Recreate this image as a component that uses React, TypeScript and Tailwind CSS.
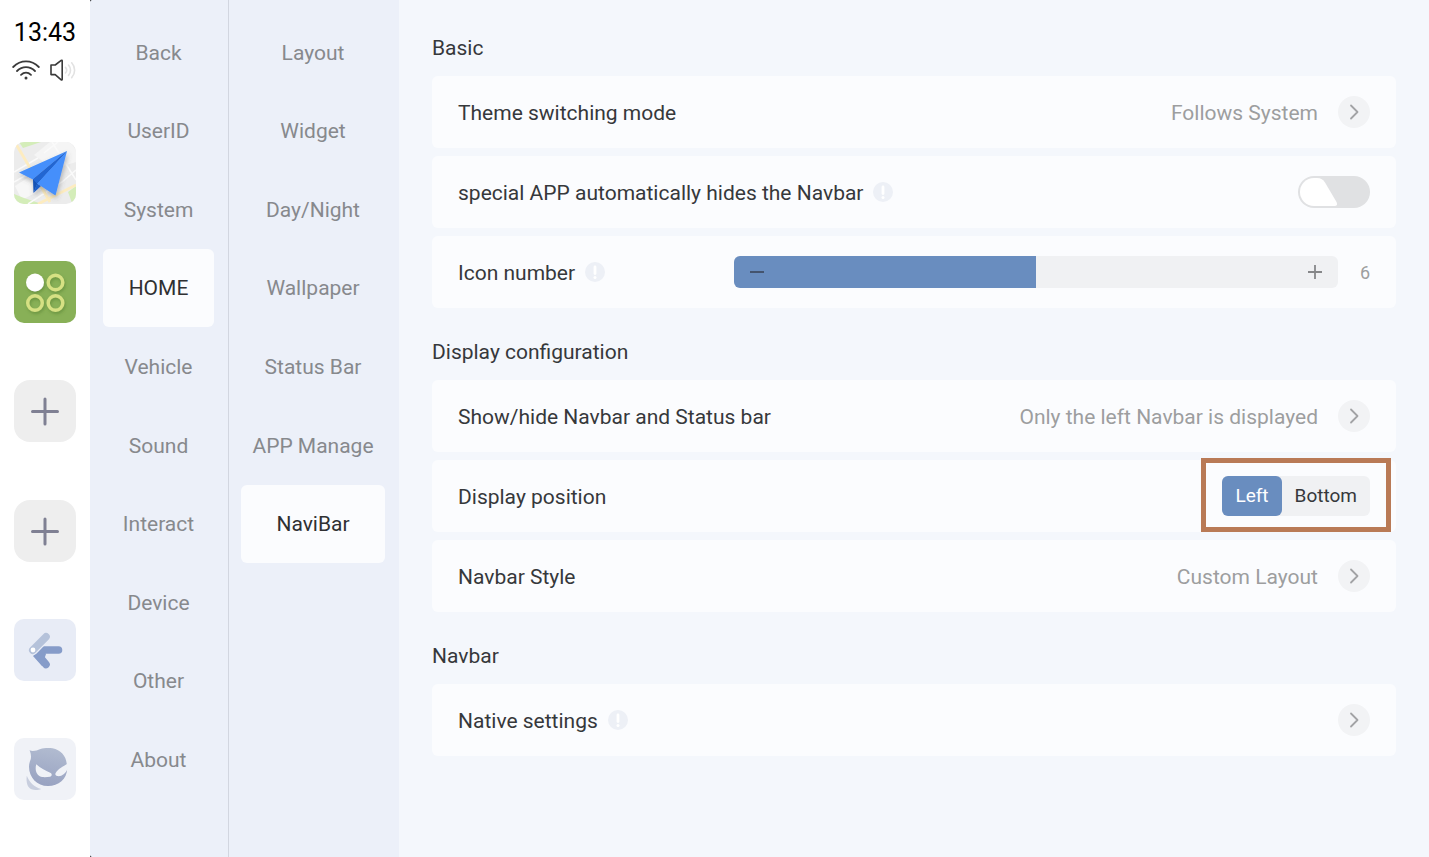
import React, { useState } from 'react';

const mainMenu = ['Back', 'UserID', 'System', 'HOME', 'Vehicle', 'Sound', 'Interact', 'Device', 'Other', 'About'];
const homeMenu = ['Layout', 'Widget', 'Day/Night', 'Wallpaper', 'Status Bar', 'APP Manage', 'NaviBar'];
const MAX_ICONS = 12;

/* Icons */
const WifiIcon = () => (
  <svg width="28" height="22" viewBox="0 0 28 22" fill="none" stroke="#3a3a3a" strokeWidth="1.8" strokeLinecap="round">
    <path d="M1.2 8C8.6 .6 19.4 .6 26.8 8" />
    <path d="M5 12c5.3-5.2 12.7-5.2 18 0" />
    <path d="M9 15.8c3-2.8 7-2.8 10 0" />
    <circle cx="14" cy="19" r="1.5" fill="#3a3a3a" stroke="none" />
  </svg>
);

const VolumeIcon = () => (
  <svg width="26" height="22" viewBox="0 0 26 22" fill="none" strokeWidth="1.6" strokeLinecap="round" strokeLinejoin="round">
    <path d="M1 6h4.200l6-4.600c.5-.4 1-.1 1 .5v18.400c0 .6-.5.9-1 .5l-6-5.200H1z" stroke="#3a3a3a" />
    <path d="M15.500 8.400c1.400 1.600 1.400 4 0 5.600M18.500 6c2.700 3 2.700 7.400 0 10.400M21.700 3.800c3.900 4.300 3.900 10.500 0 14.800" stroke="#e2e2e2" />
  </svg>
);

const MapIcon = () => (
  <svg width="62" height="62" viewBox="0 0 62 62">
    <defs>
      <filter id="planeShadow" x="-20%" y="-20%" width="150%" height="150%">
        <feDropShadow dx="1" dy="3" stdDeviation="2.5" floodColor="#555" floodOpacity="0.4" />
      </filter>
    </defs>
    <rect width="62" height="62" fill="#ececec" />
    <path d="M5 0h22L9 6z" fill="#d4edb9" />
    <path d="M20 13 36 0h20l6 8v12L40 27z" fill="#f5f5f5" />
    <path d="M1 44l20-13 9 15-22 12z" fill="#f7f7f7" />
    <path d="M0 52l10 4 18 6H0zM54 50l8-6v14l-4 3z" fill="#d4edb9" />
    <path d="M0 30 24 16M30 11 44 0M38 0l24 38M0 40l32-18M14 62l34-22 14-12" fill="none" stroke="#fafafa" strokeWidth="1.5" />
    <path d="M2 2l34 58M24 62l38-19" fill="none" stroke="#fdecc0" strokeWidth="2.8" />
    <g filter="url(#planeShadow)">
      <path d="M53 9 5 30.500l14 7z" fill="#448ffb" />
      <path d="M53 9 19 37.500l.5 13.500 4-9.500z" fill="#1553b4" />
      <path d="M23 41.500 19.500 51l7.500-7z" fill="#1a5fc9" />
      <path d="M53 9 23 41.500l18.500 12z" fill="#448ffb" />
      <path d="M53 9 19 37.500l4 4z" fill="#2266d2" />
    </g>
  </svg>
);

const AppsIcon = () => (
  <svg width="62" height="62" viewBox="0 0 62 62">
    <defs>
      <filter id="dotShadow" x="-20%" y="-20%" width="150%" height="150%">
        <feDropShadow dx="1" dy="2" stdDeviation="1.5" floodColor="#4f7a2a" floodOpacity="0.5" />
      </filter>
    </defs>
    <g filter="url(#dotShadow)">
      <circle cx="21" cy="21.500" r="9" fill="#fff" />
      <g fill="none" stroke="#d6e183" strokeWidth="3.4">
        <circle cx="41.500" cy="21.500" r="7.300" />
        <circle cx="21" cy="42" r="7.300" />
        <circle cx="41.500" cy="42" r="7.300" />
      </g>
    </g>
  </svg>
);

const PlusIcon = () => (
  <svg width="62" height="62" viewBox="0 0 62 62" stroke="#7f8093" strokeWidth="3" strokeLinecap="round">
    <path d="M18.500 31.500h25M31 19v25" />
  </svg>
);

const BackIcon = () => (
  <svg width="62" height="62" viewBox="0 0 62 62" strokeLinecap="round" strokeLinejoin="round">
    <path d="M44.500 31H26M24.500 36.500l7.500 9" fill="none" stroke="#869cc9" strokeWidth="7.6" />
    <path d="M19 37l9-8 4 6-4 12z" fill="#869cc9" />
    <path d="M18.800 31.200 32 17.800" stroke="#e8ecf6" strokeWidth="10" />
    <path d="M18.800 31.200 32 17.800" stroke="#b5c2da" strokeWidth="7.6" />
    <circle cx="19" cy="31" r="2.400" fill="#fff" />
  </svg>
);

const MaskIcon = () => (
  <svg width="62" height="62" viewBox="0 0 62 62">
    <defs>
      <linearGradient id="maskFill" x1="0.6" y1="0" x2="0.4" y2="1">
        <stop offset="0" stopColor="#b1bbd0" />
        <stop offset="1" stopColor="#98a2c1" />
      </linearGradient>
    </defs>
    <path d="M15.500 12.300c3.500 1.700 7 .2 11-1.300 3-1 8-1.300 12-.7 8 1.400 13.500 7.700 14.200 15.200l.5 5C53 41 44.500 48 34 48c-11 0-19-8.500-19-19.300 0-3 .8-5.200 1.800-7.700.5-3.200 0-6-1.300-8.700z" fill="url(#maskFill)" />
    <path d="M22.200 26.300c4.300 4.200 9.800 6.500 14.500 8.700 1.800 1.200 1 3.400-.7 3.700-2.500.4-5.500.6-8 .3-5-.8-7.500-6-5.800-12.700z" fill="#f0f2f7" />
    <path d="M54 25.500c-5 3-10.500 5.500-12.500 9.800-.5 1.500.2 2.400 1.500 2.700 4.500.8 7.700-1.500 11-7.500z" fill="#f0f2f7" />
    <path d="M12.800 37.700c3 6.800 7.200 11.300 14.400 13.300-2.700 1.200-7 1.400-9.700.3-4.200-1.800-5.600-7.300-4.700-13.600z" fill="#c8cede" />
  </svg>
);

const Chevron = () => (
  <span className="flex size-8 items-center justify-center rounded-full bg-[#f2f3f5]">
    <svg width="10" height="16" viewBox="0 0 10 16" fill="none" stroke="#a2a3a5" strokeWidth="1.8" strokeLinecap="round" strokeLinejoin="round">
      <path d="M2 1.500 8.500 8 2 14.500" />
    </svg>
  </span>
);

const Hint = () => (
  <svg width="20" height="20" viewBox="0 0 20 20" aria-hidden="true">
    <circle cx="10" cy="10" r="10" fill="#edf0f6" />
    <path d="M10 5v6.500" stroke="#fff" strokeWidth="2.8" strokeLinecap="round" />
    <circle cx="10" cy="15.500" r="1.500" fill="#fff" />
  </svg>
);

/* Building blocks */
interface MenuProps {
  items: string[];
  active: string;
  onSelect: (item: string) => void;
  className: string;
}

const Menu: React.FC<MenuProps> = ({ items, active, onSelect, className }) => (
  <nav className={`grid shrink-0 grid-rows-10 pt-[13px] pb-[58px] ${className}`}>
    {items.map(item => (
      <button
        key={item}
        onClick={() => onSelect(item)}
        className={`rounded-md pt-0.5 text-center text-[21px] ${item === active ? 'bg-[#fbfcfe] text-[#2f3032]' : 'text-[#87898d]'}`}
      >
        {item}
      </button>
    ))}
  </nav>
);

const Section: React.FC<{ title: string; children: React.ReactNode }> = ({ title, children }) => (
  <section>
    <h2 className="mb-3 text-[21px] leading-8 text-[#36383b]">{title}</h2>
    <div className="flex flex-col gap-2">{children}</div>
  </section>
);

const rowClass = 'flex h-[72px] w-full items-center justify-between rounded-md bg-[#fbfcfe] px-[26px] text-left text-[21px] text-[#36383b]';

const LinkRow: React.FC<{ label: string; value?: string; hint?: boolean }> = ({ label, value, hint }) => (
  <button className={rowClass}>
    <span className="flex items-center gap-[10px]">
      <span className="pt-1">{label}</span>
      {hint && <Hint />}
    </span>
    <span className="flex items-center gap-5 text-[#9d9e9f]">
      {value && <span className="pt-1">{value}</span>}
      <Chevron />
    </span>
  </button>
);

export default function App() {
  const [page, setPage] = useState('HOME');
  const [subPage, setSubPage] = useState('NaviBar');
  const [autoHide, setAutoHide] = useState(false);
  const [iconCount, setIconCount] = useState(6);
  const [position, setPosition] = useState('Left');

  const dock = [
    { name: 'Map', icon: <MapIcon />, style: 'rounded-[10px]' },
    { name: 'Apps', icon: <AppsIcon />, style: 'rounded-[10px] bg-[#88b057]' },
    { name: 'Add first shortcut', icon: <PlusIcon />, style: 'rounded-2xl bg-[#eeeeee]' },
    { name: 'Add second shortcut', icon: <PlusIcon />, style: 'rounded-2xl bg-[#eeeeee]' },
    { name: 'Go back', icon: <BackIcon />, style: 'rounded-[10px] bg-[#e8ecf6]' },
    { name: 'Assistant', icon: <MaskIcon />, style: 'rounded-[10px] bg-[#f0f2f7]' },
  ];

  return (
    <div className="flex h-screen min-h-[640px] bg-black font-[Roboto,sans-serif]">
      {/* Dock */}
      <aside className="flex w-[90px] shrink-0 flex-col items-center bg-white pb-[57px]">
        <div className="mt-[18px] text-[25px] leading-[30px] text-black">13:43</div>
        <div className="mt-[11px] mb-[61px] flex items-center gap-[10px] pr-0.5">
          <WifiIcon />
          <VolumeIcon />
        </div>
        <div className="flex flex-1 flex-col justify-between">
          {dock.map(app => (
            <button key={app.name} aria-label={app.name} className={`size-[62px] overflow-hidden ${app.style}`}>
              {app.icon}
            </button>
          ))}
        </div>
      </aside>

      {/* Menus */}
      <div className="flex shrink-0 rounded-l-[2px] bg-[#ecf0f9]">
        <Menu items={mainMenu} active={page} onSelect={setPage} className="w-[139px] border-r border-[#d2d6e0] pr-3.5 pl-[13px]" />
        <Menu items={homeMenu} active={subPage} onSelect={setSubPage} className="w-[170px] pr-3.5 pl-3" />
      </div>

      {/* Settings */}
      <main className="flex flex-1 flex-col gap-7 overflow-hidden bg-[#f4f7fc] px-[33px] pt-8">
        <Section title="Basic">
          <LinkRow label="Theme switching mode" value="Follows System" />
          <div className={rowClass}>
            <label htmlFor="autoHide" className="flex items-center gap-[10px]">
              <span className="pt-1">special APP automatically hides the Navbar</span>
              <Hint />
            </label>
            <span className="relative flex">
              <input
                id="autoHide"
                type="checkbox"
                checked={autoHide}
                onChange={e => setAutoHide(e.target.checked)}
                className="h-8 w-[72px] appearance-none rounded-full bg-[#e0e1e3] checked:bg-[#698dbf]"
              />
              <svg
                width="38"
                height="28"
                viewBox="0 0 38 28"
                className={`pointer-events-none absolute top-0.5 ${autoHide ? 'right-0.5 rotate-180' : 'left-0.5'}`}
              >
                <path d="M14 0h3c4 0 6 1.500 8 4.500l11.500 19.500c1.200 2.500.5 4-2 4H14A14 14 0 0 1 14 0z" fill="#fff" />
              </svg>
            </span>
          </div>
          <div className={rowClass}>
            <label htmlFor="iconCount" className="flex items-center gap-[10px]">
              <span className="pt-1">Icon number</span>
              <Hint />
            </label>
            <div className="flex w-[70%] max-w-[636px] items-center gap-[22px]">
              <div className="relative flex h-8 flex-1 items-center justify-between overflow-hidden rounded-md bg-[#f0f1f3] px-3.5">
                <div className="absolute inset-y-0 left-0 bg-[#698dbf]" style={{ width: `${(iconCount / MAX_ICONS) * 100}%` }} />
                <input
                  id="iconCount"
                  type="range"
                  min={0}
                  max={MAX_ICONS}
                  value={iconCount}
                  onChange={e => setIconCount(Number(e.target.value))}
                  className="absolute inset-0 size-full appearance-none bg-transparent [&::-webkit-slider-thumb]:appearance-none"
                />
                <button aria-label="Fewer icons" onClick={() => setIconCount(Math.max(0, iconCount - 1))} className="relative">
                  <svg width="18" height="18" viewBox="0 0 18 18" stroke="#44546e" strokeWidth="1.8">
                    <path d="M2 9h14" />
                  </svg>
                </button>
                <button aria-label="More icons" onClick={() => setIconCount(Math.min(MAX_ICONS, iconCount + 1))} className="relative">
                  <svg width="18" height="18" viewBox="0 0 18 18" stroke="#868789" strokeWidth="1.8">
                    <path d="M2 9h14M9 2v14" />
                  </svg>
                </button>
              </div>
              <output htmlFor="iconCount" className="pt-0.5 text-lg text-[#9d9e9f]">{iconCount}</output>
            </div>
          </div>
        </Section>

        <Section title="Display configuration">
          <LinkRow label="Show/hide Navbar and Status bar" value="Only the left Navbar is displayed" />
          <div role="radiogroup" aria-labelledby="positionLabel" className={rowClass}>
            <span id="positionLabel" className="pt-1">Display position</span>
            <div className="relative flex rounded-md bg-[#f0f1f3]">
              {['Left', 'Bottom'].map(option => (
                <label
                  key={option}
                  className={`rounded-md px-[13px] text-[19px] leading-10 ${option === position ? 'bg-[#698dbf] text-white' : ''}`}
                >
                  <input
                    type="radio"
                    name="position"
                    checked={option === position}
                    onChange={() => setPosition(option)}
                    className="sr-only"
                  />
                  {option}
                </label>
              ))}
              <span className="pointer-events-none absolute -inset-x-[21px] -top-[18px] -bottom-4 border-[5px] border-[#b97a56]" />
            </div>
          </div>
          <LinkRow label="Navbar Style" value="Custom Layout" />
        </Section>

        <Section title="Navbar">
          <LinkRow label="Native settings" hint />
        </Section>
      </main>
    </div>
  );
}
